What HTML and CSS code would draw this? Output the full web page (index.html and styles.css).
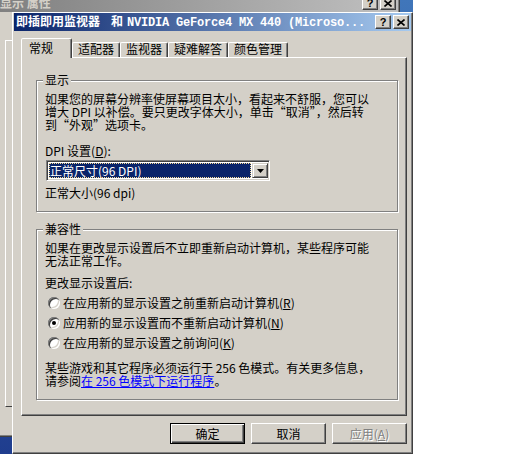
FILE: index.html
```html
<!DOCTYPE html>
<html lang="zh-CN">
<head>
    <meta charset="UTF-8">
    <meta name="viewport" content="width=device-width, initial-scale=1.0">
    <title>即插即用监视器 属性</title>
    <link rel="stylesheet" href="styles.css">
</head>
<body>
    <div class="desktop"></div>

    <div class="window back-window">
        <div class="caption inactive">
            <span class="caption-text">显示 属性</span>
            <span class="caption-btn help">?</span>
            <span class="caption-btn close">
                <svg width="8" height="7" viewBox="0 0 8 7"><path d="M0.5 0.5L7.5 6.5M7.5 0.5L0.5 6.5" stroke="#000" stroke-width="1.6"/></svg>
            </span>
        </div>
        <div class="back-page"></div>
    </div>

    <div class="window dialog">
        <div class="caption">
            <span class="caption-text">即插即用监视器<span class="and">和</span><span class="latin">NVIDIA GeForce4 MX 440 (Microso...</span></span>
            <span class="caption-btn help">?</span>
            <span class="caption-btn close">
                <svg width="8" height="7" viewBox="0 0 8 7"><path d="M0.5 0.5L7.5 6.5M7.5 0.5L0.5 6.5" stroke="#000" stroke-width="1.6"/></svg>
            </span>
        </div>

        <div class="dialog-body">
            <div class="tabs">
                <div class="tab active">常规</div>
                <div class="tab">适配器</div>
                <div class="tab">监视器</div>
                <div class="tab">疑难解答</div>
                <div class="tab">颜色管理</div>
            </div>

            <div class="tab-page">
                <div class="group">
                    <div class="group-title">显示</div>
                    <p class="text">如果您的屏幕分辨率使屏幕项目太小，看起来不舒服，您可以<br>增大 DPI 以补偿。要只更改字体大小，单击“取消”，然后转<br>到“外观”选项卡。</p>
                    <div class="field-label">DPI 设置(<u>D</u>):</div>
                    <div class="combo">
                        <div class="combo-value">正常尺寸(96 DPI)</div>
                        <div class="combo-btn">
                            <svg width="7" height="4" viewBox="0 0 7 4"><polygon points="0,0 7,0 3.5,4" fill="#000"/></svg>
                        </div>
                    </div>
                    <div class="field-note">正常大小(96 dpi)</div>
                </div>

                <div class="group compat">
                    <div class="group-title">兼容性</div>
                    <p class="text">如果在更改显示设置后不立即重新启动计算机，某些程序可能<br>无法正常工作。</p>
                    <div class="field-label">更改显示设置后:</div>
                    <div class="radios">
                        <label class="radio-row"><span class="radio"></span>在应用新的显示设置之前重新启动计算机(<u>R</u>)</label>
                        <label class="radio-row"><span class="radio checked"></span>应用新的显示设置而不重新启动计算机(<u>N</u>)</label>
                        <label class="radio-row"><span class="radio"></span>在应用新的显示设置之前询问(<u>K</u>)</label>
                    </div>
                    <p class="text note">某些游戏和其它程序必须运行于 256 色模式。有关更多信息，<br>请参阅<a href="#">在 256 色模式下运行程序</a>。</p>
                </div>
            </div>

            <div class="buttons">
                <button class="btn default">确定</button>
                <button class="btn">取消</button>
                <button class="btn" disabled>应用(<u>A</u>)</button>
            </div>
        </div>
    </div>
</body>
</html>
```

FILE: styles.css
```css
body {
    margin: 0;
    background-color: #fff;
    font-family: "Noto Sans CJK SC", sans-serif;
    font-size: 12px;
    line-height: 12px;
    color: #000;
    overflow: hidden;
}

/* desktop and windows */
.desktop {
    position: absolute;
    left: 0;
    top: 0;
    width: 413px;
    height: 454px;
    background: linear-gradient(#4076ba, #1f3d8e);
}

.window {
    position: absolute;
    box-sizing: border-box;
    background-color: #d4d0c8;
    border: 1px solid;
    border-color: #fff #404040 #404040 #fff;
    box-shadow: inset -1px -1px #808080;
    padding: 0 1px 1px 1px;
}

.back-window {
    left: -4px;
    top: -7px;
    width: 404px;
    height: 444px;
}

.dialog {
    left: 12px;
    top: 12px;
    width: 401px;
    height: 442px;
}

.caption {
    height: 18px;
    display: flex;
    align-items: center;
    padding: 0 2px;
    background: linear-gradient(to right, #0a246a, #a6caf0);
    color: #fff;
    font-weight: bold;
    white-space: nowrap;
}

.caption.inactive {
    background: linear-gradient(to right, #808080, #c0c0c0);
    color: #d4d0c8;
}

.caption-text {
    flex: 1;
    min-width: 0;
}

.caption-text .and {
    margin: 0 4px 0 11px;
}

.caption-text .latin {
    font-family: "Liberation Mono", monospace;
    letter-spacing: -0.2px;
}

.caption-btn {
    flex: none;
    width: 16px;
    height: 14px;
    box-sizing: border-box;
    display: flex;
    align-items: center;
    justify-content: center;
    background-color: #d4d0c8;
    border: 1px solid;
    border-color: #fff #404040 #404040 #fff;
    box-shadow: inset -1px -1px #808080;
    color: #000;
    font-family: "Liberation Sans", sans-serif;
    font-size: 11px;
    font-weight: bold;
}

.caption-btn.close {
    margin-left: 2px;
}

.back-page {
    margin: 28px 0 0 7px;
    height: 365px;
    border-left: 1px solid #fff;
    border-top: 1px solid #fff;
    border-bottom: 1px solid #404040;
}

/* dialog content */
.dialog-body {
    padding: 7px 4px 0 7px;
}

.tabs {
    display: flex;
    align-items: flex-end;
    height: 19px;
}

.tab {
    height: 15px;
    box-sizing: border-box;
    padding: 0 5px;
    border: 1px solid;
    border-bottom: none;
    border-color: #fff #404040 transparent #fff;
    border-radius: 2px 2px 0 0;
    box-shadow: inset -1px 0 #808080;
    white-space: nowrap;
}

.tab.active {
    position: relative;
    z-index: 1;
    width: 51px;
    height: 20px;
    margin-bottom: -1px;
    padding: 3px 0 0 7px;
    background-color: #d4d0c8;
}

.tab-page {
    height: 359px;
    box-sizing: border-box;
    border: 1px solid;
    border-color: #fff #404040 #404040 #fff;
    box-shadow: inset -1px -1px #808080;
    padding: 22px 8px 0 14px;
}

.group {
    border: 1px solid #808080;
    box-shadow: 1px 1px 0 #fff, inset 1px 1px 0 #fff;
    padding: 0 8px 12px 8px;
}

.group.compat {
    margin-top: 17px;
}

.group-title {
    display: table;
    margin: -7px 0 0 -2px;
    padding: 0 2px;
    background-color: #d4d0c8;
}

.text {
    margin: 6px 0 0;
    line-height: 13px;
    white-space: nowrap;
}

.text.note {
    margin-top: 12px;
}

.field-label {
    margin-top: 14px;
}

.compat .field-label {
    margin-top: 10px;
}

.field-note {
    margin-top: 6px;
}

.combo {
    display: flex;
    width: 224px;
    height: 21px;
    box-sizing: border-box;
    margin: 3px 0 0 1px;
    padding: 1px;
    background-color: #fff;
    border: 1px solid;
    border-color: #808080 #fff #fff #808080;
    box-shadow: inset 1px 1px #404040, inset -1px -1px #d4d0c8;
}

.combo-value {
    flex: 1;
    display: flex;
    align-items: center;
    margin: 1px;
    padding-left: 1px;
    background-color: #0a246a;
    color: #fff;
    outline: 1px dotted #f5db95;
    outline-offset: -1px;
}

.combo-btn {
    width: 16px;
    box-sizing: border-box;
    display: flex;
    align-items: center;
    justify-content: center;
    margin: 1px 0;
    background-color: #d4d0c8;
    border: 1px solid;
    border-color: #d4d0c8 #404040 #404040 #d4d0c8;
    box-shadow: inset 1px 1px #fff, inset -1px -1px #808080;
}

.radios {
    display: flex;
    flex-direction: column;
    gap: 8px;
    margin-top: 8px;
}

.radio-row {
    display: flex;
    align-items: center;
    height: 12px;
}

.radio {
    flex: none;
    width: 12px;
    height: 12px;
    margin: 0 3px;
    display: flex;
    align-items: center;
    justify-content: center;
    border-radius: 50%;
    background-color: #fff;
    box-shadow: inset 1px 1px 0 #808080, inset 2px 2px 0 #404040, inset -1px -1px 0 #fff, inset -2px -2px 0 #d4d0c8;
}

.radio.checked::after {
    content: "";
    width: 4px;
    height: 4px;
    border-radius: 50%;
    background-color: #000;
}

a {
    color: #0000ff;
}

/* bottom buttons */
.buttons {
    display: flex;
    justify-content: flex-end;
    gap: 6px;
    margin-top: 7px;
}

.btn {
    width: 75px;
    height: 21px;
    padding: 0;
    font: inherit;
    line-height: 12px;
    color: #000;
    background-color: #d4d0c8;
    border: 1px solid;
    border-color: #fff #404040 #404040 #fff;
    box-shadow: inset -1px -1px #808080;
}

.btn.default {
    border-color: #000;
    box-shadow: inset 1px 1px #fff, inset -1px -1px #404040, inset -2px -2px #808080;
}

.btn:disabled {
    color: #808080;
    text-shadow: 1px 1px #fff;
}
```
